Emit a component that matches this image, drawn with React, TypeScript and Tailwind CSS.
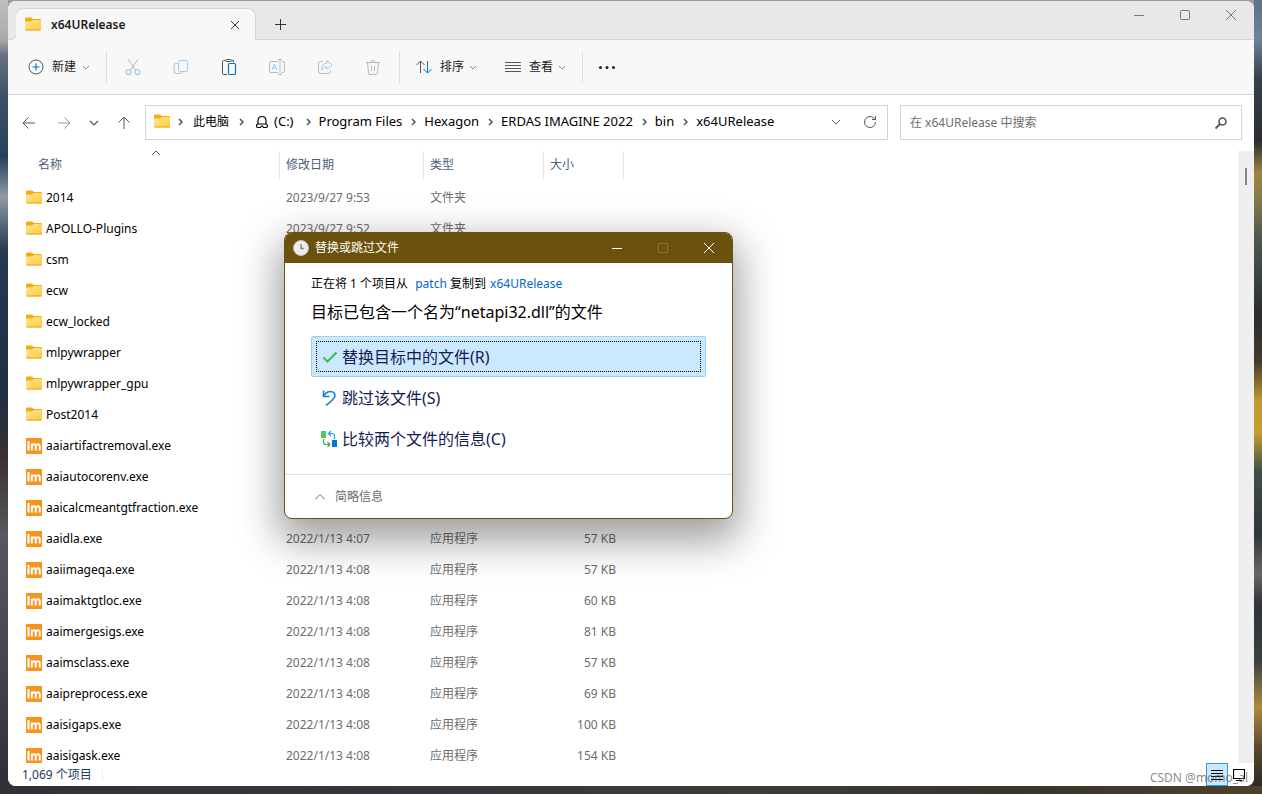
import { ReactNode } from 'react';

interface FileRow {
  name: string;
  kind: 'folder' | 'program';
  date?: string;
  size?: string;
}

const files: FileRow[] = [
  { name: '2014', kind: 'folder', date: '2023/9/27 9:53' },
  { name: 'APOLLO-Plugins', kind: 'folder', date: '2023/9/27 9:52' },
  { name: 'csm', kind: 'folder' },
  { name: 'ecw', kind: 'folder' },
  { name: 'ecw_locked', kind: 'folder' },
  { name: 'mlpywrapper', kind: 'folder' },
  { name: 'mlpywrapper_gpu', kind: 'folder' },
  { name: 'Post2014', kind: 'folder' },
  { name: 'aaiartifactremoval.exe', kind: 'program' },
  { name: 'aaiautocorenv.exe', kind: 'program' },
  { name: 'aaicalcmeantgtfraction.exe', kind: 'program' },
  { name: 'aaidla.exe', kind: 'program', date: '2022/1/13 4:07', size: '57 KB' },
  { name: 'aaiimageqa.exe', kind: 'program', date: '2022/1/13 4:08', size: '57 KB' },
  { name: 'aaimaktgtloc.exe', kind: 'program', date: '2022/1/13 4:08', size: '60 KB' },
  { name: 'aaimergesigs.exe', kind: 'program', date: '2022/1/13 4:08', size: '81 KB' },
  { name: 'aaimsclass.exe', kind: 'program', date: '2022/1/13 4:08', size: '57 KB' },
  { name: 'aaipreprocess.exe', kind: 'program', date: '2022/1/13 4:08', size: '69 KB' },
  { name: 'aaisigaps.exe', kind: 'program', date: '2022/1/13 4:08', size: '100 KB' },
  { name: 'aaisigask.exe', kind: 'program', date: '2022/1/13 4:08', size: '154 KB' },
];

const kindLabels = { folder: '文件夹', program: '应用程序' };

const crumbs = ['Program Files', 'Hexagon', 'ERDAS IMAGINE 2022', 'bin', 'x64URelease'];

function Icon({ size = 18, className = '', children }: { size?: number; className?: string; children: ReactNode }) {
  return (
    <svg width={size} height={size} viewBox={`0 0 ${size} ${size}`} className={`shrink-0 ${className}`} fill="none" stroke="currentColor" aria-hidden="true">
      {children}
    </svg>
  );
}

function FolderIcon() {
  return (
    <svg width="16" height="16" viewBox="0 0 16 16" className="shrink-0" aria-hidden="true">
      <defs>
        <linearGradient id="folder" x1="0" y1="0" x2="1" y2="1">
          <stop offset="0" stopColor="#ffe9a0" />
          <stop offset="1" stopColor="#ffc834" />
        </linearGradient>
      </defs>
      <path d="M0 1.5Q0 0.500 1.500 0.500H6L8 2H15Q16 2 16 3V5H0Z" fill="#f5ac0c" />
      <path d="M0 5Q0 4.500 1 4.500H6L8 3H15Q16 3 16 4V12.500Q16 13.500 15 13.500H1Q0 13.500 0 12.500Z" fill="url(#folder)" />
      <path d="M.5 13H15.500" stroke="#eba31f" />
    </svg>
  );
}

function ProgramIcon() {
  return (
    <svg width="16" height="16" viewBox="0 0 16 16" className="shrink-0" aria-hidden="true">
      <rect width="16" height="16" fill="#f7941e" />
      <path d="M2.500 3V12.500M5.800 12.500V5.500M5.800 8Q6.200 6.200 7.700 6.200Q9.700 6.200 9.700 8.400V12.500M9.700 8.200Q10.200 6.200 11.800 6.200Q13.700 6.200 13.700 8.400V12.500" fill="none" stroke="#fff" strokeWidth="2" />
    </svg>
  );
}

function Chevron({ dir }: { dir: 'down' | 'up' | 'right' }) {
  const paths = { down: 'M1 3L4 6L7 3', up: 'M0 6L4 2L8 6', right: 'M3 1L6 4L3 7' };
  return (
    <Icon size={8}>
      <path d={paths[dir]} strokeWidth={dir === 'right' ? 1.5 : 1} />
    </Icon>
  );
}

function TitleBar() {
  return (
    <div className="flex h-[39px] items-end border-b border-[#d5d5d5] bg-[#e8e8e8]">
      <svg width="8" height="5" viewBox="0 0 8 5" className="-mb-px shrink-0" aria-hidden="true">
        <path d="M3 4.5Q7.5 4.5 7.5 0H8V5H3Z" fill="#f8f8f8" />
        <path d="M3 4.5Q7.5 4.5 7.5 0" fill="none" stroke="#d5d5d5" />
      </svg>
      <div className="-mb-px flex h-8 w-60 shrink-0 items-center rounded-t-lg border-t border-r border-[#d5d5d5] bg-[#f8f8f8] pr-[11px] pl-[9px]">
        <FolderIcon />
        <span className="ml-2.5 flex-1 text-xs font-semibold text-[#1b1b1b]">x64URelease</span>
        <button aria-label="关闭标签页" className="p-1 text-[#333]">
          <Icon size={10}><path d="M1 1L9 9M9 1L1 9" /></Icon>
        </button>
      </div>
      <button aria-label="新建标签页" className="mb-[5px] ml-[15px] p-1 text-[#333]">
        <Icon size={11}><path d="M5.500 0V11M0 5.500H11" /></Icon>
      </button>
      <div className="flex flex-1 justify-end gap-9 self-start pt-[9px] pr-[18px] text-[#777]">
        <button aria-label="最小化"><Icon size={10}><path d="M0 5.500H10" /></Icon></button>
        <button aria-label="最大化"><Icon size={10}><rect x=".5" y=".5" width="9" height="9" rx="1" /></Icon></button>
        <button aria-label="关闭"><Icon size={10}><path d="M0 0L10 10M10 0L0 10" /></Icon></button>
      </div>
    </div>
  );
}

function Toolbar() {
  return (
    <div className="flex h-[55px] items-center border-b border-[#d5d5d5] bg-[#f8f8f8] text-xs text-[#1b1b1b]">
      <button className="ml-[19px] flex items-center">
        <Icon className="text-[#555]">
          <circle cx="9" cy="9" r="7" />
          <path d="M9 5.500V12.500M5.500 9H12.500" stroke="#0078d4" strokeWidth="1.200" />
        </Icon>
        <span className="mr-1.5 ml-[7px]">新建</span>
        <span className="text-[#888]"><Chevron dir="down" /></span>
      </button>
      <div className="ml-4 h-8 w-px bg-[#e0e0e0]" />
      <div className="ml-[17px] flex gap-[30px] text-[#b9b9b9]">
        <button aria-label="剪切">
          <Icon>
            <path d="M4 1L11.500 12M14 1L6.500 12" />
            <circle cx="4.500" cy="14" r="2.500" stroke="#99c9ef" strokeWidth="1.200" />
            <circle cx="13.500" cy="14" r="2.500" stroke="#99c9ef" strokeWidth="1.200" />
          </Icon>
        </button>
        <button aria-label="复制">
          <Icon>
            <path d="M5 5.500H4Q2 5.500 2 8V13Q2 15.500 4.500 15.500H8Q10 15.500 10.300 13.500" />
            <rect x="6.500" y="2.500" width="9" height="11" rx="2" stroke="#99c9ef" />
          </Icon>
        </button>
        <button aria-label="粘贴">
          <Icon>
            <path d="M5.500 2.500H3.500Q2.500 2.500 2.500 3.500V15.500Q2.500 16.500 3.500 16.500H7M11.500 2.500H13.500V4.500" stroke="#555" />
            <rect x="5.500" y="1.500" width="6" height="2" rx="1" stroke="#555" />
            <rect x="8.500" y="5.500" width="7" height="11" rx="1" stroke="#0078d4" strokeWidth="1.200" />
          </Icon>
        </button>
        <button aria-label="重命名">
          <Icon>
            <path d="M10 3.500H3Q1.500 3.500 1.500 5V13Q1.500 14.500 3 14.500H10M14 3.500H15Q16.500 3.500 16.500 5V13Q16.500 14.500 15 14.500H14" />
            <path d="M12 1.500V16.500M10 1.500H14M10 16.500H14M4 12L6.500 6L9 12M5 10H8" stroke="#99c9ef" />
          </Icon>
        </button>
        <button aria-label="共享">
          <Icon>
            <path d="M7 3.500H4.500Q2.500 3.500 2.500 5.500V13.500Q2.500 15.500 4.500 15.500H12.500Q14.500 15.500 14.500 13.500V12.500" />
            <path d="M11 2.500L16 7L11 11.500V9Q7.500 8.500 5.500 12Q5.500 5.500 11 5Z" stroke="#99c9ef" strokeLinejoin="round" />
          </Icon>
        </button>
        <button aria-label="删除">
          <Icon>
            <path d="M2 4.500H16M7 4.500Q7 2 9 2Q11 2 11 4.500M3.500 4.500L4.500 15Q4.700 16.500 6 16.500H12Q13.300 16.500 13.500 15L14.500 4.500M7.500 8V13M10.500 8V13" />
          </Icon>
        </button>
      </div>
      <div className="ml-[17px] h-8 w-px bg-[#e0e0e0]" />
      <button className="ml-[15px] flex items-center">
        <Icon className="text-[#555]">
          <path d="M5.500 15V3M1.500 7L5.500 3L9.500 7" />
          <path d="M12.500 3V15M8.500 11L12.500 15L16.500 11" stroke="#0078d4" />
        </Icon>
        <span className="mr-[5px] ml-[7px]">排序</span>
        <span className="text-[#888]"><Chevron dir="down" /></span>
      </button>
      <button className="ml-[27px] flex items-center">
        <Icon className="text-[#555]">
          <path d="M1 4.500H17M1 7.500H17M1 10.500H17M1 13.500H17" />
        </Icon>
        <span className="mr-[5px] ml-[7px]">查看</span>
        <span className="text-[#888]"><Chevron dir="down" /></span>
      </button>
      <div className="ml-4 h-8 w-px bg-[#e0e0e0]" />
      <button aria-label="查看更多" className="ml-[15px]">
        <Icon>
          <g fill="#222" stroke="none">
            <circle cx="2.500" cy="9.500" r="1.500" />
            <circle cx="9" cy="9.500" r="1.500" />
            <circle cx="15.500" cy="9.500" r="1.500" />
          </g>
        </Icon>
      </button>
    </div>
  );
}

function AddressRow() {
  return (
    <div className="flex h-14 items-center pr-3 pb-px text-[#555]">
      <nav className="flex items-center gap-[18px] px-3.5">
        <button aria-label="后退"><Icon size={14}><path d="M13 7H1M6.500 1.500L1 7L6.500 12.500" /></Icon></button>
        <button aria-label="前进" className="ml-[3px] text-[#999]"><Icon size={14}><path d="M1 7H13M7.500 1.500L13 7L7.500 12.500" /></Icon></button>
        <button aria-label="最近浏览的位置"><Icon size={10}><path d="M1 3L5 7L9 3" strokeWidth="1.200" /></Icon></button>
        <button aria-label="上移"><Icon size={14}><path d="M7 13V1M1.500 6.500L7 1L12.500 6.500" /></Icon></button>
      </nav>
      <div className="flex h-[35px] min-w-0 flex-1 items-center border border-[#d5d5d5] pr-2.5 pb-0.5 pl-2">
        <FolderIcon />
        <span className="ml-1.5"><Chevron dir="right" /></span>
        <button className="mr-2 ml-[9px] text-xs text-black">此电脑</button>
        <Chevron dir="right" />
        <button className="ml-2.5 flex items-center gap-[5px] pr-[3px] text-[13px] text-black">
          <Icon size={14}>
            <path d="M3 9V6Q3 1.500 7 1.500Q11 1.500 11 6V9M3.500 9Q1.500 9 1.500 11Q1.500 12.500 3 12.500H5.500L6.500 11H7.500L8.500 12.500H11Q12.500 12.500 12.500 11Q12.500 9 10.500 9Z" strokeWidth="1.200" />
          </Icon>
          (C:)
        </button>
        {crumbs.map((crumb) => (
          <span key={crumb} className="flex items-center whitespace-nowrap">
            <span className="mx-[7px]"><Chevron dir="right" /></span>
            <button className="text-[13px] text-black">{crumb}</button>
          </span>
        ))}
        <button aria-label="以前的位置" className="ml-auto"><Icon size={10}><path d="M1 3L5 7L9 3" /></Icon></button>
        <button aria-label="刷新" className="ml-[22px]">
          <Icon size={14}><path d="M12.500 7A5.500 5.500 0 1 1 10.500 2.800L12 4.500M12.500 1V4.500H9" /></Icon>
        </button>
      </div>
      <label className="ml-3 flex h-[35px] w-[342px] items-center border border-[#d5d5d5] pr-[13px] pl-[9px]">
        <input aria-label="搜索" placeholder="在 x64URelease 中搜索" className="min-w-0 flex-1 text-xs outline-none placeholder:text-[#6d6d6d]" />
        <Icon size={14}><circle cx="8.500" cy="5.500" r="3.500" strokeWidth="1.600" /><path d="M6 8L1.500 12.500" strokeWidth="1.800" /></Icon>
      </label>
    </div>
  );
}

function Row({ file }: { file: FileRow }) {
  return (
    <tr className="h-[31px] text-xs">
      <td>
        <div className="flex items-center gap-1 pl-[18px] text-black">
          {file.kind === 'program' ? <ProgramIcon /> : <FolderIcon />}
          {file.name}
        </div>
      </td>
      <td className="pl-1.5">{file.date}</td>
      <td className="pl-1.5">{file.date && kindLabels[file.kind]}</td>
      <td className="pr-2 text-right">{file.size}</td>
    </tr>
  );
}

function FileList() {
  return (
    <div className="flex min-h-0 flex-1 overflow-hidden">
      <div className="min-w-0 flex-1">
        <table className="w-[616px] table-fixed border-collapse text-left text-[#6d6d6d]">
          <colgroup>
            <col className="w-[272px]" />
            <col className="w-36" />
            <col className="w-[120px]" />
            <col className="w-20" />
          </colgroup>
          <thead>
            <tr className="h-[31px] align-top text-xs text-[#4c607a] [&>th]:p-0 [&>th]:font-normal">
              <th>
                <div className="relative flex h-7 items-center border-r border-[#e5e5e5] pl-[30px]">
                  名称
                  <span className="absolute -top-0.5 left-36 text-[#555]"><Chevron dir="up" /></span>
                </div>
              </th>
              <th><div className="flex h-7 items-center border-r border-[#e5e5e5] pl-1.5">修改日期</div></th>
              <th><div className="flex h-7 items-center border-r border-[#e5e5e5] pl-1.5">类型</div></th>
              <th><div className="flex h-7 items-center border-r border-[#e5e5e5] pl-1.5">大小</div></th>
            </tr>
          </thead>
          <tbody>
            {files.map((file) => (
              <Row key={file.name} file={file} />
            ))}
          </tbody>
        </table>
      </div>
      <div className="flex w-4 justify-center bg-[#efefef] pt-[17px]">
        <div className="h-[17px] w-0.5 bg-[#858585]" />
      </div>
    </div>
  );
}

function StatusBar() {
  return (
    <div className="flex h-[23px] items-center bg-white pr-[9px] pl-3.5 text-xs text-[#1e395b]">
      <span>1,069 个项目</span>
      <div className="ml-2.5 h-3 w-px bg-[#eee]" />
      <button aria-label="详细信息" className="ml-auto flex h-[23px] w-[22px] items-center justify-center border border-[#26a0da] bg-[#cce8ff] text-black">
        <Icon size={12}><path d="M0 1.500H12M0 4.500H12M0 7.500H12M0 10.500H12" /></Icon>
      </button>
      <button aria-label="大图标" className="ml-[5px] text-black">
        <Icon size={12}><path d="M.5 .5H11.500V9.500H.5ZM3 11.500H9" strokeWidth="1.200" /></Icon>
      </button>
    </div>
  );
}

function ReplaceDialog() {
  return (
    <div role="dialog" aria-label="替换或跳过文件" className="absolute top-[232px] left-[284px] w-[449px] overflow-hidden rounded-lg border border-[#6b510c] bg-white shadow-[0_16px_40px_6px_rgba(0,0,0,0.38)]">
      <div className="flex h-[30px] items-center bg-[#6b510c] pr-[18px] pb-px pl-2 text-xs text-white">
        <Icon size={16}>
          <circle cx="8" cy="8" r="7.500" fill="#ececec" stroke="#c5c5c5" />
          <path d="M8 4V8.500H11" stroke="#888" strokeWidth="1.500" />
        </Icon>
        <span className="ml-1.5 flex-1">替换或跳过文件</span>
        <div className="flex items-center gap-9">
          <button aria-label="最小化"><Icon size={10}><path d="M0 5.500H10" /></Icon></button>
          <button aria-label="最大化" disabled className="text-[#8b7032]"><Icon size={10}><rect x=".5" y=".5" width="9" height="9" /></Icon></button>
          <button aria-label="关闭"><Icon size={10}><path d="M0 0L10 10M10 0L0 10" /></Icon></button>
        </div>
      </div>
      <div className="px-[26px] pt-3 pb-[15px] text-black">
        <p className="text-xs leading-[18px]">
          正在将 1 个项目从 <a href="#patch" className="ml-1 text-[#0066cc]">patch</a> 复制到 <a href="#release" className="ml-px text-[#0066cc]">x64URelease</a>
        </p>
        <h2 className="mt-[7px] text-base">目标已包含一个名为“netapi32.dll”的文件</h2>
        <div className="mt-3 flex flex-col text-base text-[#151c55]">
          <button className="h-[41px] rounded-xs border border-[#99d1ff] bg-[#cce8ff] p-1 text-left">
            <span className="flex h-full items-center gap-1 border border-dotted border-black pl-[5px]">
              <Icon size={16}><path d="M1.500 8.500L5.500 12.500L14.500 3.500" stroke="#45b649" strokeWidth="2" /></Icon>
              替换目标中的文件(R)
            </span>
          </button>
          <button className="flex h-[41px] items-center gap-[5px] pl-2.5 text-left">
            <Icon size={16}><path d="M2.500 .5V6.500H8.500M2.500 6.500Q5 1.500 9.500 1.500Q14 2 14 5.500Q14 8.500 5 15.500" stroke="#1683d8" strokeWidth="1.600" /></Icon>
            跳过该文件(S)
          </button>
          <button className="flex h-[41px] items-center gap-[5px] pl-2.5 text-left">
            <Icon size={16}>
              <rect width="5" height="7" fill="#4cc95a" stroke="none" />
              <rect x="11" y="9" width="5" height="7" fill="#0078d4" stroke="none" />
              <path d="M2.500 8V11Q2.500 13.500 5 13.500H9M6.500 11L9 13.500L6.500 16" stroke="#3fae49" strokeWidth="1.200" />
              <path d="M13.500 8V5Q13.500 2.500 11 2.500H7.500M10 0L7.500 2.500L10 5" stroke="#1b9de2" strokeWidth="1.200" />
            </Icon>
            比较两个文件的信息(C)
          </button>
        </div>
      </div>
      <div className="flex h-[44px] items-center border-t border-[#dfdfdf] pl-[30px] text-xs text-[#6d6d6d]">
        <button className="flex items-center gap-2.5">
          <Icon size={10}><path d="M0 7.500L5 2.500L10 7.500" /></Icon>
          简略信息
        </button>
      </div>
    </div>
  );
}

export default function App() {
  return (
    <div className="relative flex h-screen flex-col overflow-hidden bg-[#9b9b9c] font-['Noto_Sans','Noto_Sans_CJK_SC',sans-serif]">
      <div className="flex min-h-0 flex-1">
        <div className="w-2 shrink-0 bg-[linear-gradient(#c3bfc0_0%,#a9a9ac_5%,#66727f_7%,#3e5369_12%,#27405a_20%,#8f9aa5_25%,#25394f_32%,#1d2f43_50%,#3a3032_58%,#57575d_68%,#44464c_84%,#2e3036_100%)]" />
        <div className="flex min-w-0 flex-1 flex-col bg-[linear-gradient(#9b9b9c_50%,#34353a_50%)] pt-px">
          <div className="flex min-h-0 flex-1 flex-col overflow-hidden rounded-lg bg-white">
            <TitleBar />
            <Toolbar />
            <AddressRow />
            <FileList />
            <StatusBar />
          </div>
        </div>
        <div className="w-2 shrink-0 bg-[linear-gradient(#5f7186_0%,#6d8298_5%,#34404c_10%,#2c2e32_18%,#9c8640_22%,#887b48_25%,#4f5a50_30%,#2a2d30_40%,#47382b_46%,#c29a2c_51%,#c99d2c_55%,#3d4f46_60%,#30363a_68%,#686767_73%,#2f3238_77%,#39403f_84%,#b18a3d_90%,#5b4a2b_95%,#2e2a22_100%)]" />
      </div>
      <div className="h-2 shrink-0 bg-[linear-gradient(90deg,#303238,#34363b_30%,#3d3c38_60%,#37342c_80%,#4d412b)]" />
      <ReplaceDialog />
      <span className="pointer-events-none absolute right-[14px] bottom-2 text-xs leading-4 text-[#555]/70">CSDN @momo_al</span>
    </div>
  );
}
